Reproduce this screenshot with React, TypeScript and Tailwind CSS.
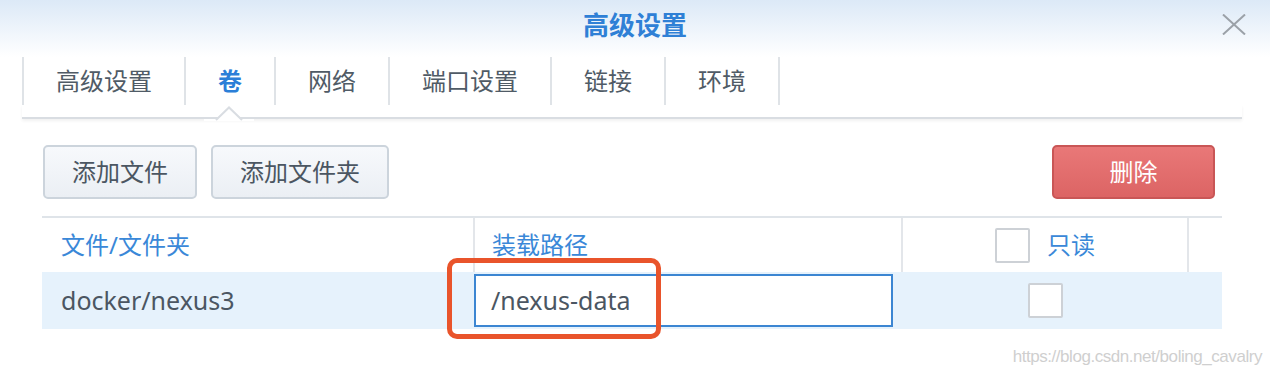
import React from "react";

const TABS = ["高级设置", "卷", "网络", "端口设置", "链接", "环境"];
const ACTIVE = 1;

function Checkbox() {
  return <div className="w-[35px] h-[35px] border-2 border-[#cdd1d6] rounded-[2px] bg-white" />;
}

export default function App() {
  return (
    <div
      className="relative w-[1270px] h-[376px] overflow-hidden bg-white text-[#4b5662]"
      style={{ fontFamily: '"Noto Sans", "Noto Sans CJK SC", sans-serif' }}
    >
      {/* window header */}
      <div className="relative h-[57px] bg-gradient-to-b from-[#dce9f7] to-white">
        <div className="h-[50px] flex items-center justify-center text-[26px] leading-none font-bold text-[#2f80d6]">
          高级设置
        </div>
        <svg className="absolute right-[24px] top-[14px]" width="24" height="21" viewBox="0 0 24 21">
          <path d="M1 0.5 L23 20.5 M23 0.5 L1 20.5" stroke="#9ba1a8" strokeWidth="2" fill="none" />
        </svg>
      </div>

      {/* tabs */}
      <div className="flex ml-[22px] h-[48px]">
        {TABS.map((t, i) => (
          <div
            key={t}
            className={
              "flex items-center px-[32px] border-l-2 border-[#dfe3e7] text-[24px] leading-none " +
              (i === TABS.length - 1 ? "border-r-2 " : "") +
              (i === ACTIVE ? "text-[#2b7fd8] font-bold" : "text-[#505b66]")
            }
          >
            {t}
          </div>
        ))}
      </div>
      <div className="relative ml-[22px] mr-[28px] h-[14px] border-b-2 border-[#d9dde2] shadow-[0_2px_3px_rgba(0,0,0,0.06)]">
        <svg className="absolute left-[182px] top-[1px]" width="50" height="15" viewBox="0 0 50 15">
          <path d="M0 13 L13.5 13 L25 1 L36.5 13 L50 13 L50 15 L0 15 Z" fill="white" />
          <path d="M12 14 L25 1.5 L38 14" stroke="#d9dde2" strokeWidth="2" fill="none" />
        </svg>
      </div>

      {/* toolbar */}
      <div className="flex items-center mt-[26px] pl-[43px] pr-[55px] h-[54px]">
        <div className="flex gap-[14px]">
          <button className="h-[54px] w-[154px] rounded-[5px] border-2 border-[#ccd4dc] bg-gradient-to-b from-[#f7f9fc] to-[#ebeff4] text-[24px] leading-none text-[#4b5662]">
            添加文件
          </button>
          <button className="h-[54px] w-[178px] rounded-[5px] border-2 border-[#ccd4dc] bg-gradient-to-b from-[#f7f9fc] to-[#ebeff4] text-[24px] leading-none text-[#4b5662]">
            添加文件夹
          </button>
        </div>
        <button className="ml-auto h-[54px] w-[163px] rounded-[5px] border-2 border-[#c95656] bg-gradient-to-b from-[#e97878] to-[#dc6464] text-[24px] leading-none text-white">
          删除
        </button>
      </div>

      {/* table */}
      <div className="mt-[17px] ml-[42px] w-[1180px] border-t-2 border-[#dfe4e9]">
        <div className="flex h-[54px] text-[24px] leading-none text-[#3a88d8]">
          <div className="w-[431px] flex items-center pl-[19px]">文件/文件夹</div>
          <div className="w-[428px] flex items-center pl-[17px] border-l-2 border-[#e3e6ea]">装载路径</div>
          <div className="w-[288px] flex items-center justify-center gap-[17px] border-l-2 border-r-2 border-[#e3e6ea]">
            <Checkbox />
            <span>只读</span>
          </div>
          <div className="flex-1" />
        </div>
        <div className="flex h-[57px] bg-[#e6f2fc] text-[25px] leading-none">
          <div className="w-[431px] flex items-center pl-[19px] text-[#4b5662]">docker/nexus3</div>
          <div className="w-[428px] flex items-center pl-[1px] pr-[8px]">
            <div className="w-full h-[53px] flex items-center pl-[15px] border-2 border-[#3c86d2] bg-white text-[#4b5662]">
              /nexus-data
            </div>
          </div>
          <div className="w-[288px] flex items-center justify-center">
            <Checkbox />
          </div>
          <div className="flex-1" />
        </div>
      </div>

      {/* annotation box */}
      <div className="absolute left-[447px] top-[258px] w-[214px] h-[81px] border-[5px] border-[#e9542b] rounded-[10px]" />

      {/* watermark */}
      <div
        className="absolute right-[8px] top-[348px] text-[17px] leading-none tracking-[-0.45px] text-[#cfcfcf]"
        style={{ fontFamily: '"Liberation Sans", sans-serif' }}
      >
        https://blog.csdn.net/boling_cavalry
      </div>
    </div>
  );
}
